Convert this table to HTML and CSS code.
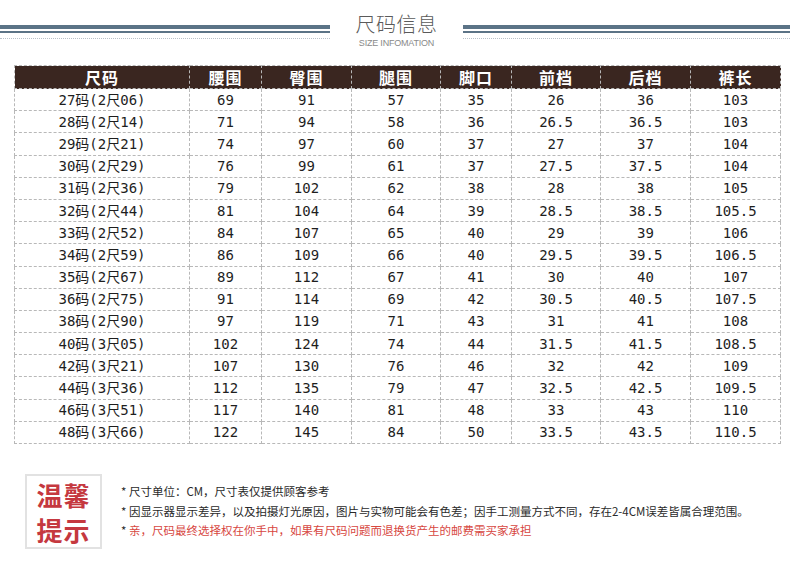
FILE: index.html
```html
<!DOCTYPE html>
<html lang="zh">
<head>
<meta charset="utf-8">
<title>尺码信息</title>
<link rel="stylesheet" href="styles.css">
</head>
<body>
<div class="page">
  <div class="title-bar">
    <div class="rule rule-left"><div class="thick"></div><div class="thin"></div><div class="dots"></div></div>
    <div class="title">
      <div class="title-cn">尺码信息</div>
      <div class="title-en">SIZE INFOMATION</div>
    </div>
    <div class="rule rule-right"><div class="thick"></div><div class="thin"></div><div class="dots"></div></div>
  </div>

  <table class="size-table">
    <colgroup>
      <col class="c1"><col class="c2"><col class="c3"><col class="c4"><col class="c5"><col class="c6"><col class="c7"><col class="c8">
    </colgroup>
    <thead>
      <tr><th>尺码</th><th>腰围</th><th>臀围</th><th>腿围</th><th>脚口</th><th>前档</th><th>后档</th><th>裤长</th></tr>
    </thead>
    <tbody>
      <tr><td>27码(2尺06)</td><td>69</td><td>91</td><td>57</td><td>35</td><td>26</td><td>36</td><td>103</td></tr>
      <tr><td>28码(2尺14)</td><td>71</td><td>94</td><td>58</td><td>36</td><td>26.5</td><td>36.5</td><td>103</td></tr>
      <tr><td>29码(2尺21)</td><td>74</td><td>97</td><td>60</td><td>37</td><td>27</td><td>37</td><td>104</td></tr>
      <tr><td>30码(2尺29)</td><td>76</td><td>99</td><td>61</td><td>37</td><td>27.5</td><td>37.5</td><td>104</td></tr>
      <tr><td>31码(2尺36)</td><td>79</td><td>102</td><td>62</td><td>38</td><td>28</td><td>38</td><td>105</td></tr>
      <tr><td>32码(2尺44)</td><td>81</td><td>104</td><td>64</td><td>39</td><td>28.5</td><td>38.5</td><td>105.5</td></tr>
      <tr><td>33码(2尺52)</td><td>84</td><td>107</td><td>65</td><td>40</td><td>29</td><td>39</td><td>106</td></tr>
      <tr><td>34码(2尺59)</td><td>86</td><td>109</td><td>66</td><td>40</td><td>29.5</td><td>39.5</td><td>106.5</td></tr>
      <tr><td>35码(2尺67)</td><td>89</td><td>112</td><td>67</td><td>41</td><td>30</td><td>40</td><td>107</td></tr>
      <tr><td>36码(2尺75)</td><td>91</td><td>114</td><td>69</td><td>42</td><td>30.5</td><td>40.5</td><td>107.5</td></tr>
      <tr><td>38码(2尺90)</td><td>97</td><td>119</td><td>71</td><td>43</td><td>31</td><td>41</td><td>108</td></tr>
      <tr><td>40码(3尺05)</td><td>102</td><td>124</td><td>74</td><td>44</td><td>31.5</td><td>41.5</td><td>108.5</td></tr>
      <tr><td>42码(3尺21)</td><td>107</td><td>130</td><td>76</td><td>46</td><td>32</td><td>42</td><td>109</td></tr>
      <tr><td>44码(3尺36)</td><td>112</td><td>135</td><td>79</td><td>47</td><td>32.5</td><td>42.5</td><td>109.5</td></tr>
      <tr><td>46码(3尺51)</td><td>117</td><td>140</td><td>81</td><td>48</td><td>33</td><td>43</td><td>110</td></tr>
      <tr><td>48码(3尺66)</td><td>122</td><td>145</td><td>84</td><td>50</td><td>33.5</td><td>43.5</td><td>110.5</td></tr>
    </tbody>
  </table>

  <div class="notice">
    <div class="notice-badge"><span class="badge-line">温馨</span><span class="badge-line">提示</span></div>
    <ul class="notice-list">
      <li>* 尺寸单位：CM，尺寸表仅提供顾客参考</li>
      <li>* 因显示器显示差异，以及拍摄灯光原因，图片与实物可能会有色差；因手工测量方式不同，存在2-4CM误差皆属合理范围。</li>
      <li>* <span class="red">亲，尺码最终选择权在你手中，如果有尺码问题而退换货产生的邮费需买家承担</span></li>
    </ul>
  </div>
</div>
</body>
</html>
```

FILE: styles.css
```css
html, body {
  margin: 0;
  padding: 0;
  background: #ffffff;
}

.page {
  width: 790px;
  height: 567px;
  overflow: hidden;
  font-family: "Noto Sans CJK SC", sans-serif;
}

/* ---------- title bar ---------- */
.title-bar {
  display: flex;
  align-items: flex-start;
  padding-top: 12px;
  height: 65px;
  box-sizing: border-box;
}

.rule {
  display: flex;
  flex-direction: column;
  padding-top: 13px;
}

.rule-left {
  width: 330px;
}

.rule-right {
  flex: 1;
}

.thick {
  height: 4px;
  background: #5b7386;
}

.thin {
  height: 2px;
  margin-top: 2px;
  background: #5b7386;
}

.dots {
  height: 0;
  margin-top: 5px;
  border-top: 1px dotted #b9c2ca;
}

.title {
  width: 133px;
  text-align: center;
  color: #5a5a5a;
}

.title-cn {
  font-size: 20px;
  font-weight: 300;
  line-height: 24px;
  letter-spacing: 0.5px;
}

.title-en {
  font-family: "Liberation Sans", sans-serif;
  font-size: 9px;
  line-height: 10px;
  margin-top: 2px;
  color: #8a8a8a;
  letter-spacing: -0.2px;
}

/* ---------- table ---------- */
.size-table {
  margin-left: 14px;
  width: 766px;
  border-collapse: collapse;
  table-layout: fixed;
}

.c1 { width: 175px; }
.c2 { width: 72px; }
.c3 { width: 90px; }
.c4 { width: 89px; }
.c5 { width: 71px; }
.c6 { width: 89px; }
.c7 { width: 90px; }
.c8 { width: 90px; }

.size-table th,
.size-table td {
  border: 1px dashed #b8b8b8;
  padding: 0;
  text-align: center;
  vertical-align: middle;
}

.size-table th {
  background: #3a2620;
  color: #ffffff;
  font-size: 16px;
  font-weight: 700;
  height: 22px;
  line-height: 20px;
  letter-spacing: 1px;
}

.size-table td {
  height: 21.2px;
  line-height: 20px;
  font-family: "DejaVu Sans Mono", "Noto Sans CJK SC", monospace;
  font-size: 14px;
  color: #1e1e1e;
}

/* ---------- notice ---------- */
.notice {
  display: flex;
  align-items: center;
  margin-top: 30px;
  padding-left: 25px;
}

.notice-badge {
  width: 73px;
  height: 71px;
  border: 2px solid #e2e2e2;
  color: #c5383f;
  font-size: 26px;
  font-weight: 700;
  line-height: 35px;
  text-align: center;
  display: flex;
  flex-direction: column;
  align-items: center;
  justify-content: center;
  letter-spacing: 1px;
}

.badge-line {
  display: block;
  height: 35px;
}

.notice-list {
  list-style: none;
  margin: 0 0 0 19px;
  padding: 0;
  font-size: 11.5px;
  line-height: 19.5px;
  color: #2a2a2a;
}

.red {
  color: #d7473f;
}
```
